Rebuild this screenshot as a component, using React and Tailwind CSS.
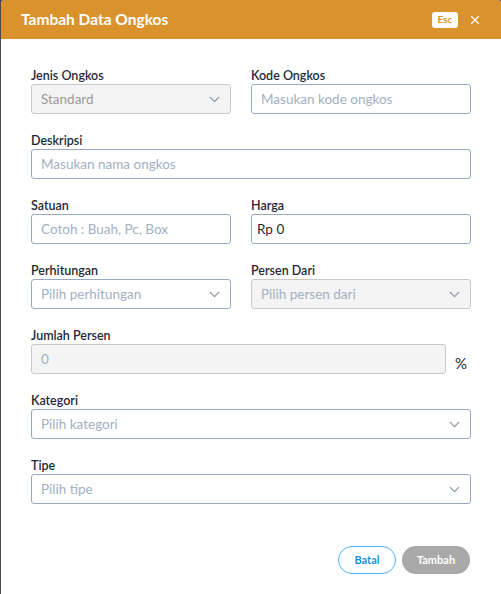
import { ChevronDown, X } from 'lucide-react'

const font = { fontFamily: 'Lato, "Noto Sans", sans-serif' }

function Label({ children }) {
  return <label className="block text-[12.5px] leading-[14px] font-semibold text-[#1f2937] mb-[1px]">{children}</label>
}

function TextInput({ placeholder, value, disabled }) {
  return (
    <div className={`h-[30px] rounded-[3px] border flex items-center text-[13.5px] ${value ? 'px-[5px]' : 'px-[9px]'} ${disabled ? 'bg-[#f4f4f4] border-[#c9c9c9]' : 'bg-white border-[#9aa9c2]'}`}>
      {value ? <span className="text-[#1f2937]">{value}</span> : <span className="text-[#a3b0c2]">{placeholder}</span>}
    </div>
  )
}

function Select({ placeholder, disabled, valueGray }) {
  return (
    <div className={`h-[30px] rounded-[3px] border pl-[9px] pr-[7px] flex items-center justify-between text-[13.5px] ${disabled ? 'bg-[#f4f4f4] border-[#c9c9c9]' : 'bg-white border-[#9aa9c2]'}`}>
      <span className={valueGray ? 'text-[#9a9a9a]' : 'text-[#a3b0c2]'}>{placeholder}</span>
      <ChevronDown size={17} strokeWidth={1.75} className="text-[#8a94a3]" />
    </div>
  )
}

export default function App() {
  return (
    <div className="w-[501px] h-[594px] bg-[#4a4a4a] pl-[1px]" style={font}>
      <div className="h-full bg-white rounded-t-[4px] overflow-hidden flex flex-col">
        <div className="h-[39px] bg-[#da932c] flex items-center justify-between pl-[20px] pr-[19px] shrink-0">
          <h2 className="text-white text-[15.5px] font-bold">Tambah Data Ongkos</h2>
          <div className="flex items-center gap-[10px]">
            <span className="bg-white text-[#da932c] text-[10px] font-bold rounded-[3px] w-[26px] h-[16px] flex items-center justify-center">Esc</span>
            <X size={14} strokeWidth={2} className="text-white" />
          </div>
        </div>

        <div className="px-[30px] pt-[30px] flex flex-col gap-[20px]">
          <div className="grid grid-cols-[200px_220px] gap-x-[20px]">
            <div>
              <Label>Jenis Ongkos</Label>
              <Select placeholder="Standard" disabled valueGray />
            </div>
            <div>
              <Label>Kode Ongkos</Label>
              <TextInput placeholder="Masukan kode ongkos" />
            </div>
          </div>

          <div>
            <Label>Deskripsi</Label>
            <TextInput placeholder="Masukan nama ongkos" />
          </div>

          <div className="grid grid-cols-[200px_220px] gap-x-[20px]">
            <div>
              <Label>Satuan</Label>
              <TextInput placeholder="Cotoh : Buah, Pc, Box" />
            </div>
            <div>
              <Label>Harga</Label>
              <TextInput value="Rp 0" />
            </div>
          </div>

          <div className="grid grid-cols-[200px_220px] gap-x-[20px]">
            <div>
              <Label>Perhitungan</Label>
              <Select placeholder="Pilih perhitungan" />
            </div>
            <div>
              <Label>Persen Dari</Label>
              <Select placeholder="Pilih persen dari" disabled />
            </div>
          </div>

          <div>
            <Label>Jumlah Persen</Label>
            <div className="flex items-end gap-[9px]">
              <div className="w-[415px]">
                <TextInput placeholder="0" disabled />
              </div>
              <span className="text-[15px] text-[#1f2937] leading-none mb-[3px]">%</span>
            </div>
          </div>

          <div>
            <Label>Kategori</Label>
            <Select placeholder="Pilih kategori" />
          </div>

          <div>
            <Label>Tipe</Label>
            <Select placeholder="Pilih tipe" />
          </div>
        </div>

        <div className="mt-[42px] px-[31px] flex justify-end gap-[6px]">
          <button className="h-[28px] w-[58px] rounded-full border border-[#4db3f0] text-[#1a8fd8] text-[11px] font-bold">Batal</button>
          <button className="h-[28px] w-[68px] rounded-full bg-[#a9a9a9] text-white text-[11px] font-bold">Tambah</button>
        </div>
      </div>
    </div>
  )
}
